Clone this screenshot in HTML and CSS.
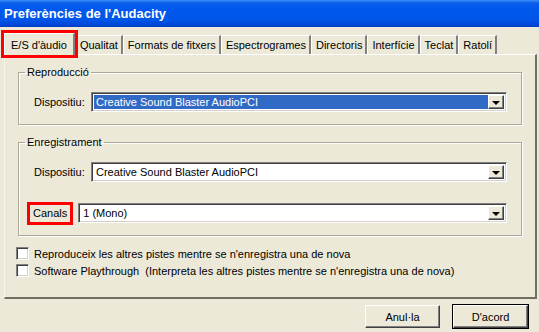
FILE: index.html
```html
<!DOCTYPE html>
<html lang="ca">
<head>
    <meta charset="UTF-8">
    <meta name="viewport" content="width=device-width, initial-scale=1.0">
    <title>Preferències de l'Audacity</title>
    <link rel="stylesheet" href="styles.css">
</head>
<body>
    <div class="titlebar">Preferències de l'Audacity</div>

    <div class="tabs">
        <div class="tab active marked">E/S d'àudio</div>
        <div class="tab">Qualitat</div>
        <div class="tab">Formats de fitxers</div>
        <div class="tab">Espectrogrames</div>
        <div class="tab">Directoris</div>
        <div class="tab">Interfície</div>
        <div class="tab">Teclat</div>
        <div class="tab">Ratolí</div>
    </div>

    <div class="panel">
        <fieldset class="group">
            <legend>Reproducció</legend>
            <div class="row">
                <label class="lbl">Dispositiu:</label>
                <div class="combo">
                    <span class="value selected">Creative Sound Blaster AudioPCI</span>
                    <span class="arrow"></span>
                </div>
            </div>
        </fieldset>

        <fieldset class="group second">
            <legend>Enregistrament</legend>
            <div class="row">
                <label class="lbl">Dispositiu:</label>
                <div class="combo">
                    <span class="value">Creative Sound Blaster AudioPCI</span>
                    <span class="arrow"></span>
                </div>
            </div>
            <div class="row gap">
                <label class="lbl short marked">Canals</label>
                <div class="combo">
                    <span class="value">1 (Mono)</span>
                    <span class="arrow"></span>
                </div>
            </div>
        </fieldset>

        <div class="checks">
            <div class="check"><span class="box"></span>Reproduceix les altres pistes mentre se n'enregistra una de nova</div>
            <div class="check"><span class="box"></span>Software Playthrough&nbsp; (Interpreta les altres pistes mentre se n'enregistra una de nova)</div>
        </div>
    </div>

    <div class="buttons">
        <button class="btn">Anul·la</button>
        <button class="btn default">D'acord</button>
    </div>
</body>
</html>
```

FILE: styles.css
```css
* { box-sizing: border-box; }
body { margin: 0; width: 539px; height: 332px; overflow: hidden; background: #ece9d8; font-family: 'Liberation Sans', Arial, sans-serif; font-size: 11px; color: #000; }

.titlebar { height: 27px; display: flex; align-items: center; padding: 0 0 1px 4px; color: #fff; font-weight: bold; font-size: 13px; background: linear-gradient(#3d8df5 0, #0a5fea 3px, #0058ee 8px, #0056e8 20px, #0046d6 25px, #003cc4 27px); }

.tabs { display: flex; align-items: flex-end; height: 22px; margin-top: 5px; padding-left: 4px; }
.tab { height: 19px; display: flex; align-items: center; padding: 0 3px 0 4px; border-left: 1px solid #fff; border-top: 1px solid #fff; border-right: 2px solid #808080; white-space: nowrap; }
.tab.active { height: 22px; margin-bottom: -1px; padding: 0 6px; background: #ece9d8; position: relative; z-index: 1; }
.marked { outline: 3px solid #f00; }

.panel { width: 533px; height: 245px; margin-left: 4px; padding: 11px 14px 0 13px; border-top: 1px solid #fff; border-left: 1px dotted #fff; border-right: 2px solid #716f64; border-bottom: 2px solid #716f64; }

.group { margin: 0; padding: 13px 14px 12px 15px; width: 504px; border: 1px solid #aca899; box-shadow: 1px 1px 0 #fff, inset 1px 1px 0 #fff; }
.group legend { padding: 0 2px; margin-left: -9px; line-height: 13px; }
.group.second { margin-top: 11px; }

.row { display: flex; align-items: center; height: 20px; }
.row.gap { margin-top: 21px; }
.lbl { width: 57px; flex: none; }
.lbl.short { width: auto; height: 17px; display: flex; align-items: center; margin: 0 8px 0 -4px; padding: 0 3px; }

.combo { flex: 1; height: 20px; display: flex; background: #fff; border-top: 1px solid #808080; border-left: 1px solid #808080; border-right: 1px solid #fff; border-bottom: 1px solid #fff; box-shadow: inset 1px 1px 0 #404040, inset -1px -1px 0 #d4d0c8; padding: 2px; }
.value { flex: 1; display: flex; align-items: center; padding-left: 2px; }
.value.selected { background: #316ac5; color: #fff; }
.arrow { width: 16px; flex: none; display: flex; align-items: center; justify-content: center; background: #ece9d8; border-top: 1px solid #fff; border-left: 1px solid #fff; border-right: 1px solid #404040; border-bottom: 1px solid #404040; box-shadow: inset -1px -1px 0 #808080; }
.arrow::after { content: ''; border-left: 4px solid transparent; border-right: 4px solid transparent; border-top: 4px solid #000; margin-top: 1px; }

.checks { margin: 9px 0 0 -2px; }
.check { display: flex; align-items: center; height: 17px; white-space: nowrap; }
.box { width: 13px; height: 13px; margin-right: 5px; background: #fff; border-top: 1px solid #808080; border-left: 1px solid #808080; border-right: 1px solid #fff; border-bottom: 1px solid #fff; box-shadow: inset 1px 1px 0 #404040, inset -1px -1px 0 #d4d0c8; }

.buttons { display: flex; justify-content: flex-end; gap: 13px; margin-top: 6px; padding-right: 11px; }
.btn { width: 75px; height: 23px; font: inherit; color: #000; background: #ece9d8; border-top: 1px solid #fff; border-left: 1px solid #fff; border-right: 1px solid #404040; border-bottom: 1px solid #404040; box-shadow: inset -1px -1px 0 #808080; padding: 0; }
.btn.default { outline: 1px solid #000; }
```
